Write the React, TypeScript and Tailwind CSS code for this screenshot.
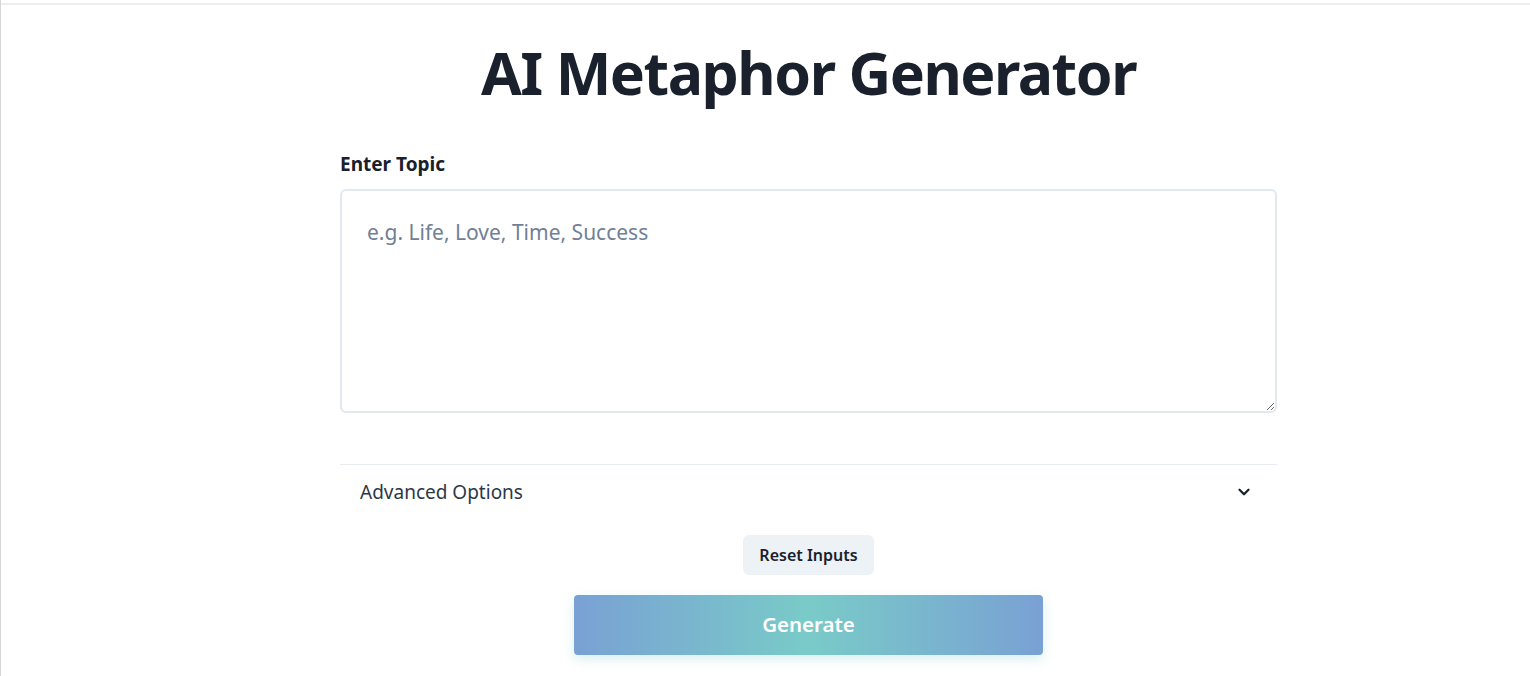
import { ChevronDown } from "lucide-react";

const App = () => {
  return (
    <div className="min-h-[676px] bg-white border-l border-[#d6d6d6] font-['Noto_Sans',sans-serif]">
      <div className="h-[3px]" />
      <div className="border-t-2 border-[#eceef2] pl-[86px]">
        <div className="w-[937px] mx-auto">
          <h1 className="text-center text-[59px] font-bold text-[#1a202c] leading-none pt-[38px] pb-[50px] tracking-tight">
            AI Metaphor Generator
          </h1>
          <label className="block text-[19px] font-bold text-[#1a202c] leading-6 mb-[13px]">
            Enter Topic
          </label>
          <textarea
            className="block w-full h-[224px] border-2 border-[#e2e8f0] rounded-md px-[25px] py-[29px] text-[21px] text-[#1a202c] placeholder:text-[#718096] outline-none leading-6"
            placeholder="e.g. Life, Love, Time, Success"
          />
          <div className="mt-[51px] border-t border-[#e7ebf0]">
            <button className="w-full flex items-center justify-between px-5 py-[13px] text-[19px] text-[#2d3748]">
              <span>Advanced Options</span>
              <ChevronDown size={18} strokeWidth={3} className="text-[#1a202c] mr-[4px]" />
            </button>
          </div>
          <div className="flex flex-col items-center mt-[15px]">
            <button className="h-10 px-4 rounded-md bg-[#edf2f7] text-[16px] font-semibold text-[#1a202c]">
              Reset Inputs
            </button>
            <button className="mt-5 w-[469px] h-[60px] rounded-[4px] text-white text-[20.5px] font-semibold bg-[linear-gradient(90deg,#79a1d4_0%,#79cbc8_50%,#79a1d4_100%)] shadow-[0_4px_12px_rgba(121,203,200,0.3)]">
              Generate
            </button>
          </div>
        </div>
      </div>
    </div>
  );
};

export default App;
